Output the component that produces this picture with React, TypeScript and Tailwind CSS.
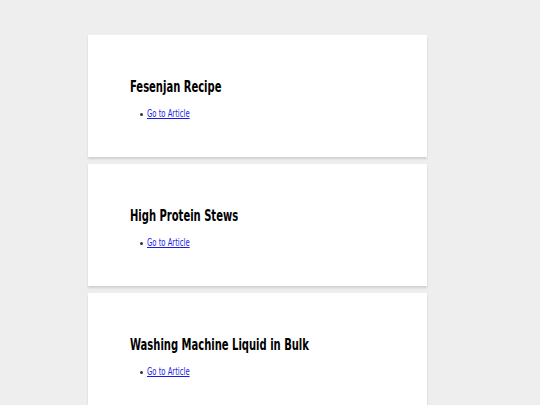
const items = ['Fesenjan Recipe', 'High Protein Stews', 'Washing Machine Liquid in Bulk'];

export default function App() {
  return (
    <div className="min-h-[405px] bg-[#eeeeee] pt-[35px] font-['DejaVu_Sans_Condensed',sans-serif]">
      <div className="ml-[88px] flex w-[339px] flex-col gap-[7px]">
        {items.map((title) => (
          <div key={title} className="h-[122px] bg-white pl-[42px] pt-[42px] shadow-[0_2px_2px_rgba(0,0,0,0.12)]">
            <h2 className="origin-left scale-x-[0.74] whitespace-nowrap text-[15px] font-bold leading-[20px] text-black">
              {title}
            </h2>
            <ul className="mt-[10px] text-[10px] leading-[14px]">
              <li className="flex items-center">
                <span className="ml-[10px] mr-[4px] h-[3px] w-[3px] rounded-full bg-[#333]" />
                <a href="#" className="origin-left scale-x-[0.76] whitespace-nowrap text-[#1a1ae6] underline">
                  Go to Article
                </a>
              </li>
            </ul>
          </div>
        ))}
      </div>
    </div>
  );
}
